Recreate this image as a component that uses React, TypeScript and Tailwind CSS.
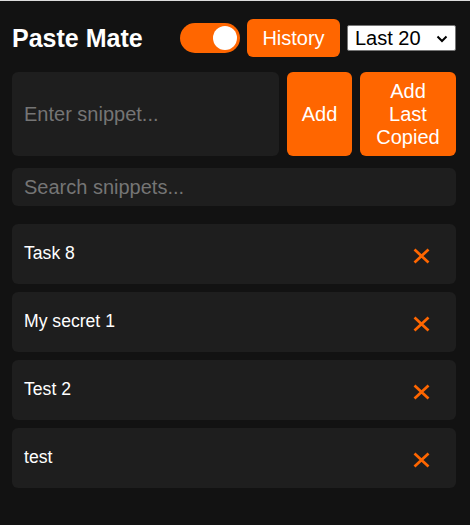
import React, { useState } from "react";

const snippets = ["Task 8", "My secret 1", "Test 2", "test"];

function XIcon() {
  return (
    <svg width="17" height="16" viewBox="0 0 17 16" fill="none">
      <path d="M1.5 1.5 L15.5 14.5 M15.5 1.5 L1.5 14.5" stroke="#ff6600" strokeWidth="2.7" strokeLinecap="butt" />
    </svg>
  );
}

export default function App() {
  const [on, setOn] = useState(true);
  return (
    <div
      className="min-h-[525px] w-[470px] bg-[#121212] border-t border-[#dcdcdc] pt-[18px] pl-3 pr-[14px] text-white"
      style={{ fontFamily: '"Liberation Sans", Arial, sans-serif' }}
    >
      <div className="flex items-center justify-between h-[38px]">
        <h1 className="text-[25px] font-bold leading-none">Paste Mate</h1>
        <div className="flex items-center gap-[7px]">
          <button
            onClick={() => setOn(!on)}
            className="w-[60px] h-[30px] rounded-full bg-[#ff6600] flex items-center justify-end pr-[3px]"
          >
            <span className="block w-[24px] h-[24px] rounded-full bg-white" />
          </button>
          <button className="w-[93px] h-[38px] rounded-[6px] bg-[#ff6600] text-white text-[20px] leading-none">
            History
          </button>
          <div className="relative w-[109px] h-[26px]">
            <select
              defaultValue="20"
              className="appearance-none w-full h-full bg-white text-black text-[20px] leading-none border border-[#767676] rounded-[2px] pl-[7px]"
              style={{ fontFamily: '"Liberation Sans", Arial, sans-serif' }}
            >
              <option value="20">Last 20</option>
              <option value="50">Last 50</option>
            </select>
            <svg
              className="absolute right-[8px] top-[10px] pointer-events-none"
              width="12"
              height="8"
              viewBox="0 0 12 8"
              fill="none"
            >
              <path d="M1.5 1.5 L6 6 L10.5 1.5" stroke="#000" strokeWidth="2" />
            </svg>
          </div>
        </div>
      </div>

      <div className="flex gap-2 h-[84px] mt-[15px]">
        <input
          placeholder="Enter snippet..."
          className="flex-1 min-w-0 h-full rounded-[6px] bg-[#1e1e1e] px-3 text-[20px] text-white placeholder:text-[#757575] outline-none"
        />
        <button className="w-[65px] h-full rounded-[6px] bg-[#ff6600] text-white text-[20px] leading-[23px]">
          Add
        </button>
        <button className="w-[96px] h-full rounded-[6px] bg-[#ff6600] text-white text-[20px] leading-[23px]">
          Add
          <br />
          Last
          <br />
          Copied
        </button>
      </div>

      <input
        placeholder="Search snippets..."
        className="block w-full h-[38px] mt-3 rounded-[6px] bg-[#1e1e1e] px-3 text-[20px] text-white placeholder:text-[#757575] outline-none"
      />

      <div className="flex flex-col gap-2 mt-[18px]">
        {snippets.map((s) => (
          <div key={s} className="flex items-center justify-between h-[60px] rounded-[6px] bg-[#1e1e1e] pl-3">
            <span className="text-[17.6px] leading-none">{s}</span>
            <button className="mr-[26px] mt-[3px] flex items-center justify-center">
              <XIcon />
            </button>
          </div>
        ))}
      </div>
    </div>
  );
}
